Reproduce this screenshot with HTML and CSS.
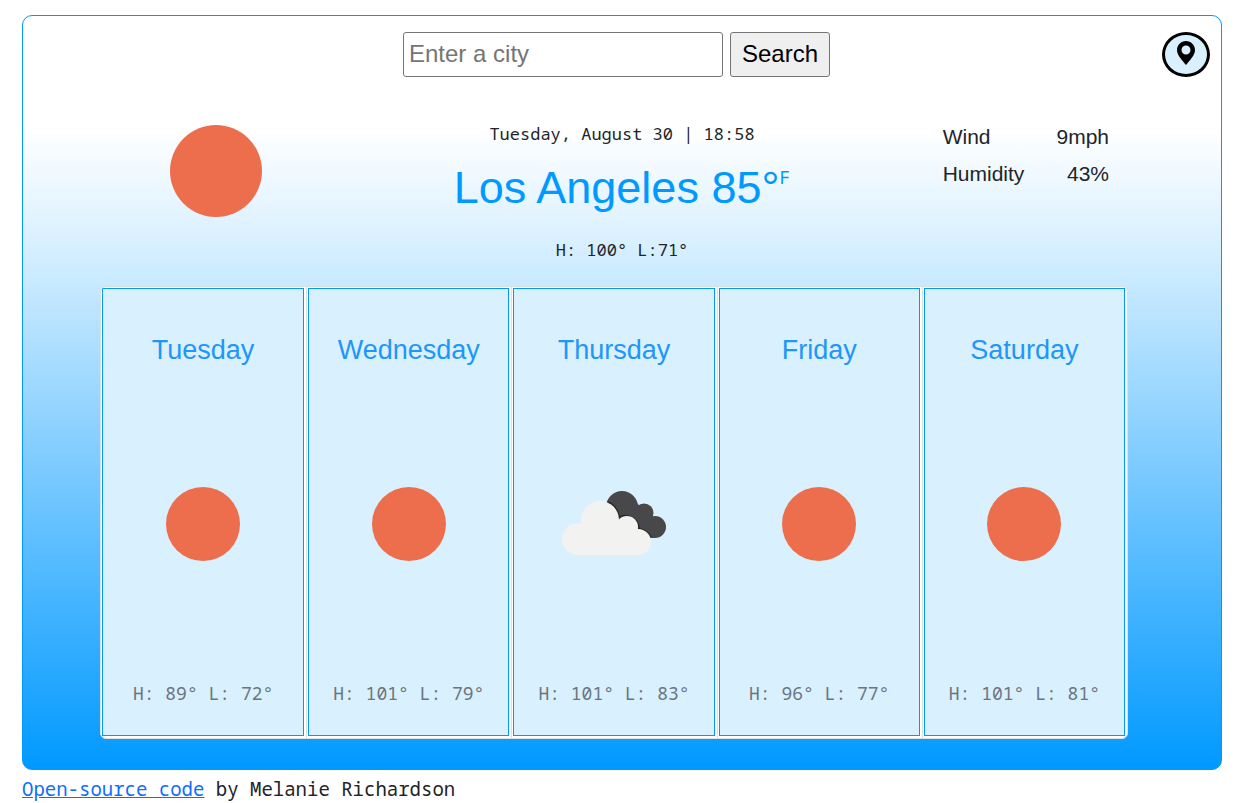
FILE: index.html
```html
<!DOCTYPE html>
<html lang="en">
<head>
<meta charset="utf-8">
<meta name="viewport" content="width=device-width, initial-scale=1">
<title>Weather</title>
<link rel="stylesheet" href="styles.css">
</head>
<body>
<svg class="defs" width="0" height="0" aria-hidden="true">
  <symbol id="sun" viewBox="0 0 100 100"><circle cx="50" cy="50" r="50" fill="#ed6e4c"/></symbol>
  <symbol id="clouds" viewBox="0 0 104 66">
    <g fill="#48484a">
      <circle cx="60" cy="16" r="16"/><circle cx="82" cy="22" r="9.500"/><circle cx="93" cy="36" r="11"/>
      <path d="M50 28 72 10 84 20 96 40 93 47H70Z"/>
    </g>
    <path fill="none" stroke="#2c2c2e" stroke-width="2" d="M46 11C52 14 56 20 57 26C68 22 77 29 77 38C83 39 87 42 89 46"/>
    <g fill="#f2f2f0">
      <circle cx="38" cy="29" r="19"/><circle cx="65" cy="36" r="11"/><circle cx="16" cy="48" r="16"/><circle cx="76" cy="51" r="13"/>
      <path d="M16 64H77V44L65 30H40L20 40Z"/>
    </g>
  </symbol>
</svg>
<main class="weather">
  <header class="topbar">
    <form class="search">
      <input class="city-input" type="search" placeholder="Enter a city" aria-label="City">
      <button class="search-button" type="button">Search</button>
    </form>
    <button class="locate" type="button" aria-label="Use current location">
      <svg width="18" height="24" viewBox="0 0 18 24"><path fill="#000" fill-rule="evenodd" d="M9 0C4 0 0 4 0 9C0 14 5 19 9 24C13 19 18 14 18 9C18 4 14 0 9 0ZM9 4.500A4.500 4.500 0 1 1 9 13.500A4.500 4.500 0 1 1 9 4.500Z"/></svg>
    </button>
  </header>
  <section class="current">
    <div class="current-icon"><svg width="92" height="92" role="img" aria-label="Clear sky"><use href="#sun"/></svg></div>
    <div class="summary">
      <p class="date">Tuesday, August 30 | 18:58</p>
      <h1 class="place">Los Angeles 85<span class="degree">°</span><span class="unit">F</span></h1>
      <p class="range">H: 100° L:71°</p>
    </div>
    <dl class="details">
      <div class="detail"><dt>Wind</dt><dd>9mph</dd></div>
      <div class="detail"><dt>Humidity</dt><dd>43%</dd></div>
    </dl>
  </section>
  <section class="forecast">
    <article class="day"><div class="day-body"><h2>Tuesday</h2><svg class="sun" role="img" aria-label="Clear"><use href="#sun"/></svg><p>H: 89° L: 72°</p></div></article>
    <article class="day"><div class="day-body"><h2>Wednesday</h2><svg class="sun" role="img" aria-label="Clear"><use href="#sun"/></svg><p>H: 101° L: 79°</p></div></article>
    <article class="day"><div class="day-body"><h2>Thursday</h2><svg class="clouds" role="img" aria-label="Broken clouds"><use href="#clouds"/></svg><p>H: 101° L: 83°</p></div></article>
    <article class="day"><div class="day-body"><h2>Friday</h2><svg class="sun" role="img" aria-label="Clear"><use href="#sun"/></svg><p>H: 96° L: 77°</p></div></article>
    <article class="day"><div class="day-body"><h2>Saturday</h2><svg class="sun" role="img" aria-label="Clear"><use href="#sun"/></svg><p>H: 101° L: 81°</p></div></article>
  </section>
</main>
<footer class="credit"><a href="#">Open-source code</a> by Melanie Richardson</footer>
</body>
</html>
```
FILE: styles.css
```css
* { box-sizing: border-box; }
body {
  margin: 15px 26px 0 22px;
  font-family: "Liberation Sans", Arial, sans-serif;
  color: #212529;
  background: #fff;
}
h1, h2, p, dl, dd { margin: 0; font-weight: 400; }
svg { display: block; }
.defs { position: absolute; }
.weather {
  border: 1px solid #0099ff;
  border-radius: 10px;
  padding: 16px 0 30px;
  background: linear-gradient(#fff 15%, #d9f0ff 30%, #0099ff 100%);
}
.topbar {
  display: grid;
  grid-template-columns: 1fr auto 1fr;
  padding: 0 11px 0 0;
}
.search { grid-column: 2; display: flex; gap: 7px; }
.city-input, .search-button {
  height: 45px;
  font: 24px "Liberation Sans", Arial, sans-serif;
  border: 1px solid #767676;
  border-radius: 3px;
}
.city-input { width: 320px; padding: 0 5px 2px; background: #fff; appearance: none; }
.city-input::placeholder { color: #757575; opacity: 1; }
.search-button { width: 100px; padding: 0 0 2px; color: #000; background: #efefef; }
.locate {
  justify-self: end;
  width: 48px;
  height: 45px;
  padding: 0 0 4px;
  display: flex;
  align-items: center;
  justify-content: center;
  border: 3px solid #000;
  border-radius: 50%;
  background: #d9f0ff;
}
.current {
  display: grid;
  grid-template-columns: repeat(3, 1fr);
  padding-top: 42px;
}
.current-icon { display: flex; justify-content: center; padding: 6px 14px 0 0; }
.summary { text-align: center; font-family: "Noto Sans Mono", "DejaVu Sans Mono", monospace; }
.date, .range { font-size: 17px; line-height: 30px; }
.place {
  padding: 12px 0 21px;
  font: 45px/53px "Liberation Sans", Arial, sans-serif;
  color: #0099ff;
}
.unit {
  font: 18px/0 "Noto Sans Mono", "DejaVu Sans Mono", monospace;
  vertical-align: 19px;
}
.details { padding: 0 112px 0 121px; margin-top: -1px; font-size: 21px; line-height: 37px; }
.detail { display: flex; justify-content: space-between; }
.forecast {
  display: grid;
  grid-template-columns: repeat(5, 1fr);
  margin: 21px 93px 0 77px;
  border: 1px solid #dfdfdf;
  border-radius: 6px;
  overflow: hidden;
  background: #fff;
}
.day { padding: 1px 2px 2px 1px; }
.day + .day { border-left: 1px solid #dfdfdf; }
.day-body {
  height: 100%;
  padding: 44px 0 28px;
  display: flex;
  flex-direction: column;
  align-items: center;
  border: 1px solid #0099ff;
  background: #d9f0ff;
}
.day h2 { font-size: 27px; line-height: 34px; color: #1e96fa; }
.day svg { margin: 120px 0 118px; }
.sun { width: 74px; height: 74px; }
.clouds { width: 104px; height: 74px; }
.day p { font: 18px/28px "Noto Sans Mono", "DejaVu Sans Mono", monospace; color: #6c757d; }
.credit { padding-top: 5px; font: 19px/29px "Noto Sans Mono", "DejaVu Sans Mono", monospace; }
.credit a { color: #0d6efd; text-decoration: underline; }
```
